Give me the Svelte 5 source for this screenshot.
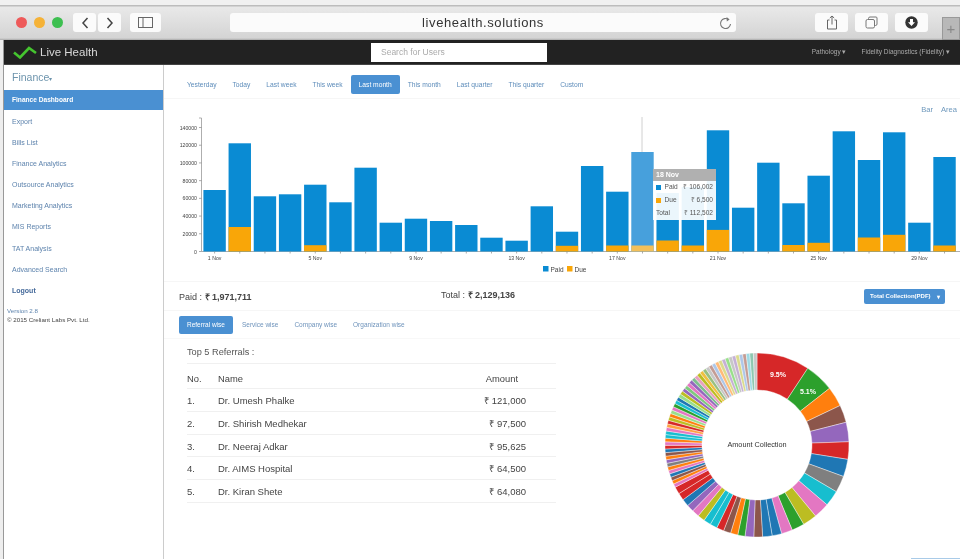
<script>
  const ranges = ['Yesterday','Today','Last week','This week','Last month','This month','Last quarter','This quarter','Custom'];
  const menu = ['Export','Bills List','Finance Analytics','Outsource Analytics','Marketing Analytics','MIS Reports','TAT Analysis','Advanced Search'];
  const tabs = ['Referral wise','Service wise','Company wise','Organization wise'];
  const rows = [['1.','Dr. Umesh Phalke','₹ 121,000'],['2.','Dr. Shirish Medhekar','₹ 97,500'],['3.','Dr. Neeraj Adkar','₹ 95,625'],['4.','Dr. AIMS Hospital','₹ 64,500'],['5.','Dr. Kiran Shete','₹ 64,080']];

  const base = 251.5, x0 = 203.4, pitch = 25.17, bw = 22.4;
  const bars = [
    [190,0],[143.3,24.5],[196.3,0],[194.3,0],[184.7,6.3],[202.3,0],[167.7,0],[222.7,0],[218.7,0],[221,0],
    [225,0],[237.7,0],[240.7,0],[206.3,0],[231.7,5.7],[166,0],[191.7,6],[152,6],[193,11],[187,6],
    [130.3,21.6],[207.7,0],[162.7,0],[203.3,6.5],[175.7,8.7],[131.3,0],[160,14],[132.3,16.7],[222.7,0],[157,6]
  ].map(([t,d],i)=>({x:x0+i*pitch, top:t, due:d, i}));
  const yLabels = [0,20000,40000,60000,80000,100000,120000,140000];
  const xLabels = [[0,'1 Nov'],[4,'5 Nov'],[8,'9 Nov'],[12,'13 Nov'],[16,'17 Nov'],[20,'21 Nov'],[24,'25 Nov'],[28,'29 Nov']];

  const big = [[33.5,'#d62728'],[18.5,'#2ca02c'],[12.6,'#ff7f0e'],[11.1,'#8c564b'],[12.3,'#9467bd'],[11,'#d62728'],[11,'#1f77b4'],[10.5,'#7f7f7f'],[10,'#17becf'],[10,'#e377c2'],[9,'#bcbd22'],[8,'#2ca02c'],[7,'#e377c2'],[6,'#1f77b4'],[6,'#1f77b4'],[5.5,'#8c564b'],[5.5,'#9467bd']];
  const mid = ['#2ca02c','#ff7f0e','#8c564b','#d62728','#17becf','#17becf','#bcbd22','#e377c2','#9467bd','#1f77b4','#d62728','#d62728'];
  const zoneA = ['#e377c2','#ff7f0e','#8c564b','#1f77b4','#e377c2','#ff7f0e','#7f7f7f','#9467bd','#ff7f0e','#8c564b','#1f77b4','#d62728','#e377c2','#ff7f0e','#17becf','#17becf'];
  const zoneB = ['#e377c2','#ff9f40','#d62728','#bcbd22','#ff7f0e','#98df8a','#e377c2','#2ca02c','#17becf','#1f77b4','#98df8a','#bcbd22','#9467bd','#7fc97f','#e377c2'];
  const zoneC = ['#9467bd','#7fbf8f','#e8a0c0','#bcbd22','#f0c040','#98c080','#c7c7c7','#c49c94','#aec7e8','#ffbb78','#dbdb8d','#c5b0d5','#98df8a','#c7c7c7','#c5b0d5','#dbdb8d','#aec7e8','#c49c94','#9edae5','#8fc7b0','#c7c7c7'];
  const used = big.reduce((s,b)=>s+b[0],0);
  const midW = 4.6;
  const small = [...zoneA,...zoneB,...zoneC];
  const each = (360-used-mid.length*midW)/small.length;
  const all = [...big,...mid.map(c=>[midW,c]),...small.map(c=>[each,c])];

  const cx=757, cy=444, R=92, r=55;
  const pt=(a,rad)=>{const t=(a-90)*Math.PI/180;return `${(cx+rad*Math.cos(t)).toFixed(2)} ${(cy+rad*Math.sin(t)).toFixed(2)}`};
  let acc=0;
  const slices = all.map(([d,c])=>{
    const a=acc,b=acc+d; acc=b;
    const lg=d>180?1:0;
    return {c,d:`M${pt(a,R)}A${R} ${R} 0 ${lg} 1 ${pt(b,R)}L${pt(b,r)}A${r} ${r} 0 ${lg} 0 ${pt(a,r)}Z`};
  });
</script>

<div class="page">
  <header class="chrome">
    <div class="lights"><i class="l red"></i><i class="l amber"></i><i class="l green"></i></div>
    <div class="navbtns">
      <button class="cbtn nb" aria-label="Back"><svg width="10" height="14" viewBox="0 0 10 14"><path d="M7.5 2 3 7l4.5 5" fill="none" stroke="#444" stroke-width="1.5"/></svg></button>
      <button class="cbtn nb" aria-label="Forward"><svg width="10" height="14" viewBox="0 0 10 14"><path d="M2.5 2 7 7l-4.5 5" fill="none" stroke="#444" stroke-width="1.5"/></svg></button>
    </div>
    <button class="cbtn side" aria-label="Sidebar"><svg width="15" height="11" viewBox="0 0 15 11"><rect x=".5" y=".5" width="14" height="10" fill="none" stroke="#666"/><path d="M5 .5v10" stroke="#666"/></svg></button>
    <div class="address">
      <span>livehealth.solutions</span>
      <svg class="reload" width="13" height="14" viewBox="0 0 13 14"><path d="M9.6 3.6A5 5 0 1 0 11.5 8" fill="none" stroke="#777" stroke-width="1.1"/><path d="M7.6 1 10.6 3.4 7.8 5.6Z" fill="#777"/></svg>
    </div>
    <button class="cbtn act first" aria-label="Share"><svg width="12" height="15" viewBox="0 0 12 15"><path d="M3.5 5H1.5v9h9V5H8.5" fill="none" stroke="#666"/><path d="M6 9.5V1M3.8 3 6 1l2.2 2" fill="none" stroke="#666"/></svg></button>
    <button class="cbtn act" aria-label="Tabs"><svg width="13" height="13" viewBox="0 0 13 13"><rect x="1" y="3.5" width="8.5" height="8.5" rx="1.5" fill="none" stroke="#777"/><path d="M3.5 3.5V2.5A1.5 1.5 0 0 1 5 1h6a1 1 0 0 1 1 1v6a1.5 1.5 0 0 1-1.5 1.5h-1" fill="none" stroke="#777"/></svg></button>
    <button class="cbtn act" aria-label="Downloads"><svg width="13" height="13" viewBox="0 0 13 13"><circle cx="6.5" cy="6.5" r="6.2" fill="#333"/><path d="M5 3h3v3.2h2L6.5 10 3 6.2h2Z" fill="#fff"/></svg></button>
    <div class="newtab">+</div>
  </header>

  <nav class="topbar">
    <svg class="logo" width="24" height="14" viewBox="0 0 24 14"><path d="M1 7.5 7 12.5 16 3l7 5" fill="none" stroke="#45c52f" stroke-width="2.6"/></svg>
    <span class="brand">Live Health</span>
    <div class="search">Search for Users</div>
    <span class="navlink path">Pathology ▾</span>
    <span class="navlink">Fidelity Diagnostics (Fidelity) ▾</span>
  </nav>

  <div class="body">
    <aside class="sidebar">
      <div class="section">Finance<small>▾</small></div>
      <div class="item active">Finance Dashboard</div>
      {#each menu as m}<div class="item">{m}</div>{/each}
      <div class="item logout">Logout</div>
      <div class="version">Version 2.8</div>
      <div class="copy">© 2015 Creliant Labs Pvt. Ltd.</div>
    </aside>

    <main class="main">
      <div class="pills">
        {#each ranges as r}<span class="pill" class:on={r==='Last month'}>{r}</span>{/each}
      </div>
      <div class="toggle"><span>Bar</span><span>Area</span></div>

      <div class="chart">
        <svg width="796" height="165" viewBox="164 115 796 165">
          <path d="M199 118h2.5V251.5M201.5 251.5H960" fill="none" stroke="#999" stroke-width=".8"/>
          {#each yLabels as v}
            {@const y=251.5-v*124/140000}
            <path d={`M199 ${y}h2.5`} stroke="#888" stroke-width=".7"/>
            <text x="197" y={y+2} text-anchor="end" class="ax">{v}</text>
          {/each}
          <path d="M642 117v35" stroke="#d0d0d0" stroke-width="1"/>
          {#each bars as b}
            <rect x={b.x} y={b.top} width={bw} height={base-b.top} fill={b.i===17?'#47a0dc':'#0a8bd3'}/>
            {#if b.due}<rect x={b.x} y={base-b.due} width={bw} height={b.due} fill={b.i===17?'#f3c05a':'#f9a608'}/>{/if}
            <path d={`M${b.x+bw/2} 251.5v2`} stroke="#888" stroke-width=".7"/>
          {/each}
          {#each xLabels as [i,t]}
            <text x={x0+i*pitch+bw/2} y="260" text-anchor="middle" class="ax">{t}</text>
          {/each}
          <rect x="543" y="266" width="5.5" height="5.5" fill="#0a8bd3"/>
          <text x="550.5" y="271.5" class="lg">Paid</text>
          <rect x="567" y="266" width="5.5" height="5.5" fill="#f9a608"/>
          <text x="574.5" y="271.5" class="lg">Due</text>
        </svg>
        <div class="tip">
          <div class="tiph">18 Nov</div>
          <div class="tipr"><i class="sq paid"></i><span>Paid</span><b>₹ 106,002</b></div>
          <div class="tipr"><i class="sq due"></i><span>Due</span><b>₹ 6,500</b></div>
          <div class="tipr tot"><span>Total</span><b>₹ 112,502</b></div>
        </div>
      </div>

      <div class="summary">
        <div class="paid-t">Paid : <strong>₹ 1,971,711</strong></div>
        <div class="total-t">Total : <strong>₹ 2,129,136</strong></div>
        <div class="pdf"><span>Total Collection(PDF)</span><em>▾</em></div>
      </div>

      <div class="tabs">
        {#each tabs as t}<span class="tab" class:on={t==='Referral wise'}>{t}</span>{/each}
      </div>

      <div class="content">
        <div class="left">
          <div class="title">Top 5 Referrals :</div>
          <div class="row head"><span>No.</span><span>Name</span><span class="amt">Amount</span></div>
          {#each rows as r}
            <div class="row"><span>{r[0]}</span><span>{r[1]}</span><span class="val">{r[2]}</span></div>
          {/each}
        </div>
        <svg class="pie" width="215" height="205" viewBox="650 345 215 205">
          {#each slices as s}<path d={s.d} fill={s.c} stroke="#fff" stroke-width=".4"/>{/each}
          <text x="778" y="375.5" text-anchor="middle" class="pl">9.5%</text>
          <text x="808" y="392.5" text-anchor="middle" class="pl">5.1%</text>
          <text x="757" y="446" text-anchor="middle" class="pc">Amount Collection</text>
        </svg>
      </div>
      <div class="peek"></div>
    </main>
  </div>
</div>

<style>
  :global(body){margin:0;background:#fff;overflow:hidden}
  .page{width:960px;height:559px;overflow:hidden;font-family:"Liberation Sans",Arial,sans-serif;display:flex;flex-direction:column;box-sizing:border-box;padding-left:4px;position:relative;background:#fff;filter:blur(.5px)}
  .page::before{content:"";position:absolute;left:0;top:0;bottom:0;width:3px;background:#eee;border-right:1px solid #999}
  .chrome{height:40px;flex:none;margin-left:-4px;padding-top:6px;box-sizing:border-box;background:linear-gradient(#f1f1f1 0,#f1f1f1 5px,#bdbdbd 5px,#bdbdbd 6px,#e9e9e9 7px,#d4d4d4 38px,#aaa 40px);display:flex;align-items:flex-start;position:relative;z-index:1}
  .lights{display:flex;gap:7px;margin:10.5px 0 0 16px}
  .l{display:block;width:11px;height:11px;border-radius:50%}
  .red{background:#ee5a5a}.amber{background:#f5b237}.green{background:#3dbf50}
  .cbtn{border:0;padding:0;background:#fbfbfb;border-radius:3px;height:19px;margin-top:7px;display:flex;align-items:center;justify-content:center}
  .navbtns{display:flex;gap:2px;margin-left:10px}
  .nb{width:23px}
  .side{width:31px;margin-left:9px}
  .address{width:506px;height:19px;margin:7px 0 0 69px;background:#fbfbfb;border-radius:3px;display:flex;align-items:center;justify-content:center;position:relative;font-size:13px;letter-spacing:.6px;color:#333}
  .reload{position:absolute;right:4px;top:3px}
  .act{width:33px;margin-left:7px}
  .first{margin-left:79px}
  .newtab{position:absolute;right:0;top:17px;width:18px;height:23px;background:#b8b8b8;border:1px solid #999;box-sizing:border-box;color:#888;font-size:15px;line-height:21px;text-align:center}
  .topbar{height:25px;flex:none;background:#222;display:flex;align-items:center;color:#ddd;box-sizing:border-box;border-bottom:1px solid #444}
  .logo{margin-left:9px}
  .brand{font-size:11.5px;margin-left:3px;color:#d8d8d8;width:331px}
  .search{width:176px;height:19px;background:#fff;box-sizing:border-box;padding-left:10px;font-size:8.5px;line-height:19px;color:#aaa}
  .navlink{font-size:6.5px;color:#aaa;margin-right:10px;white-space:nowrap}
  .path{margin-left:auto;margin-right:15px}
  .body{flex:1;display:flex;min-height:0}
  .sidebar{width:160px;flex:none;box-sizing:border-box;border-right:1px solid #ccc;background:#fff}
  .section{height:25px;padding-left:8px;font-size:10.5px;line-height:25px;color:#6d94ad}
  .section small{font-size:6px}
  .item{height:21.2px;line-height:21.2px;padding-left:8px;font-size:7px;color:#5d83ad}
  .item.active{height:20px;line-height:20px;background:#4a90d2;color:#fff;font-weight:700;font-size:6.6px;margin-bottom:.5px}
  .logout{font-weight:700;color:#44699a}
  .version{font-size:6.2px;color:#5d83ad;padding-left:3px;margin-top:5px;line-height:9px}
  .copy{font-size:6.2px;color:#444;padding-left:3px;line-height:9px}
  .main{flex:1;min-width:0;position:relative}
  .pills{margin-top:10px;padding:0 0 4px 15px;display:flex;height:19px;border-bottom:1px solid #f6f6f6}
  .pill{padding:0 8px;font-size:6.7px;line-height:19px;color:#5d8cba;border-radius:2px;white-space:nowrap}
  .pill.on{background:#4a90d2;color:#fff}
  .toggle{height:16px;box-sizing:border-box;padding:6px 3px 0 0;display:flex;justify-content:flex-end;gap:8px;font-size:7.6px;line-height:10px;color:#6f99bd}
  .chart{height:165px;position:relative}
  .chart svg{display:block}
  .ax{font-size:5.2px;fill:#444;font-family:"Liberation Sans",sans-serif}
  .lg{font-size:6.5px;fill:#444;font-family:"Liberation Sans",sans-serif}
  .tip{position:absolute;left:489px;top:54px;width:63px;background:rgba(255,255,255,.92);font-size:6.6px;color:#555;line-height:12.6px}
  .tiph{background:#b0b0b0;color:#fff;font-weight:700;height:12px;line-height:12px;padding-left:3px;font-size:7px}
  .tipr{display:flex;align-items:center;padding:0 3px;gap:3px;height:13px}
  .tipr b{font-weight:400;margin-left:auto}
  .sq{width:4.5px;height:4.5px;display:block;margin-right:1px}
  .sq.paid{background:#0a8bd3}.sq.due{background:#f9a608}
  .summary{height:28px;border-top:1px solid #f6f6f6;border-bottom:1px solid #f6f6f6;margin-top:1px;display:flex;align-items:center;padding-left:15px;font-size:9px;color:#444}
  .summary strong{font-weight:700}
  .paid-t{width:262px;padding-top:1px}
  .total-t{padding-bottom:3px}
  .pdf{margin-left:auto;margin-right:15px;width:81px;height:15px;background:#4a90d2;border-radius:2px;color:#fff;font-size:6px;display:flex;align-items:center;padding-left:6px;box-sizing:border-box;font-weight:700;white-space:nowrap}
  .pdf em{font-style:normal;margin-left:auto;margin-right:5px;font-size:6px}
  .tabs{margin:5px 0 0 15px;height:18px;display:flex}
  .tab{padding:0 8px;font-size:6.5px;line-height:18px;color:#6e93bb;border-radius:2px;white-space:nowrap}
  .tab.on{background:#4a90d2;color:#fff;margin-right:1px}
  .content{display:flex;margin-top:4px;padding-left:23px;border-top:1px solid #f8f8f8;align-items:flex-start}
  .left{width:369px;flex:none;font-size:9.5px;color:#444}
  .title{box-sizing:border-box;height:25px;padding-top:6px;line-height:14px;font-size:9.2px;border-bottom:1px solid #f0f0f0;color:#555}
  .row{display:grid;grid-template-columns:31px 1fr auto;height:22.7px;box-sizing:border-box;padding:1px 30px 0 0;align-items:center;border-bottom:1px solid #f0f0f0}
  .row.head{height:25.3px;padding-top:4px;font-size:9.4px}
  .amt{margin-right:8px}
  .pie{margin:7px 0 0 94px;flex:none}
  .pl{font-size:7px;font-weight:700;fill:#fff;font-family:"Liberation Sans",sans-serif}
  .pc{font-size:7.3px;fill:#333;font-family:"Liberation Sans",sans-serif}
  .peek{position:absolute;right:0;bottom:0;width:49px;height:1.5px;background:#a9cbe8}
</style>
